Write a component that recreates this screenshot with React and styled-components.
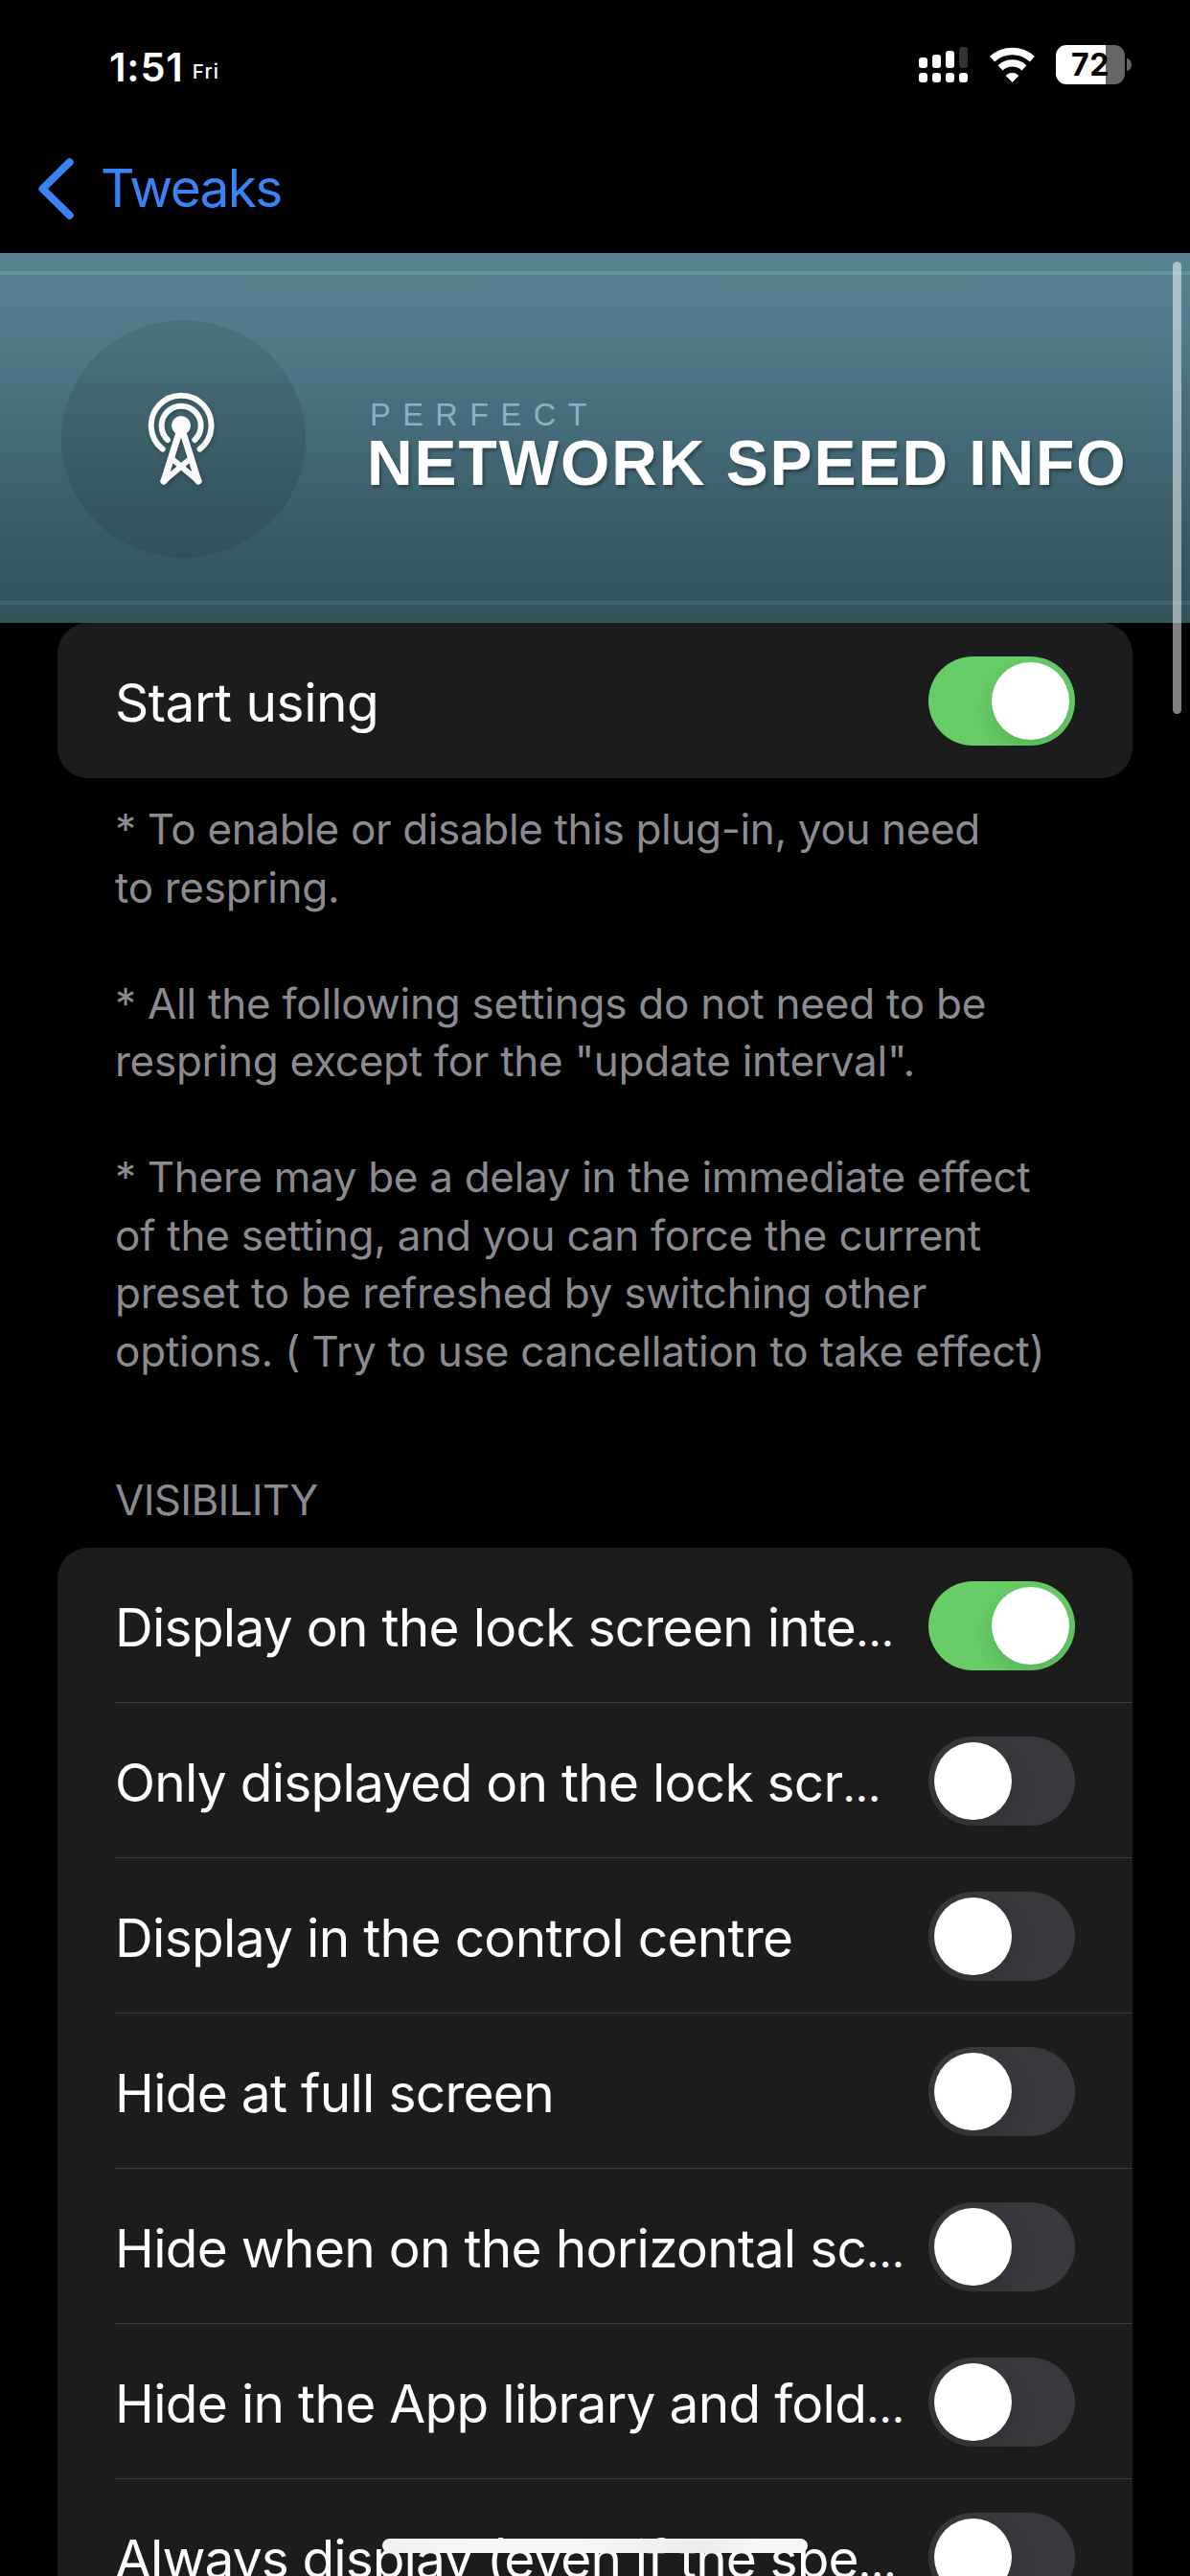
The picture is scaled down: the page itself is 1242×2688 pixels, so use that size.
import React from "react";
import styled, { createGlobalStyle } from "styled-components";

const GlobalStyle = createGlobalStyle`
  html, body {
    margin: 0;
    padding: 0;
    background: #000;
  }
  *, *::before, *::after {
    box-sizing: border-box;
  }
`;

const Screen = styled.main`
  position: relative;
  display: flex;
  flex-direction: column;
  width: 1242px;
  height: 2688px;
  overflow: hidden;
  background: #000;
  color: #fff;
  font-family: Inter, "Liberation Sans", sans-serif;
`;

/* ---------- Status bar ---------- */

const StatusBar = styled.header`
  display: flex;
  flex: none;
  align-items: center;
  justify-content: space-between;
  height: 135px;
  padding: 0 61px 0 114px;
`;

const Clock = styled.div`
  display: flex;
  align-items: center;
`;

const Time = styled.span`
  margin-top: 5px;
  font-size: 41.5px;
  font-weight: 600;
  line-height: 50px;
  letter-spacing: 0.8px;
`;

const Weekday = styled.span`
  margin: 14px 0 0 9px;
  font-size: 20.6px;
  font-weight: 500;
  line-height: 26px;
  letter-spacing: 1.2px;
`;

const Indicators = styled.div`
  display: flex;
  align-items: center;
`;

const SignalIcon = styled.svg`
  display: block;
  width: 51px;
  height: 37px;
  margin-right: 22px;
`;

const WifiIcon = styled.svg`
  display: block;
  width: 50px;
  height: 38px;
  margin-right: 20px;
`;

const Battery = styled.div`
  display: flex;
  align-items: center;
`;

const BatteryBody = styled.div`
  display: flex;
  align-items: center;
  justify-content: center;
  width: 72px;
  height: 41px;
  border-radius: 11px;
  background: linear-gradient(to right, #fff 52px, #666 52px);
  color: #000;
  font-size: 32px;
  font-weight: 700;
  line-height: 40px;
  letter-spacing: 0.6px;
`;

const BatteryCap = styled.div`
  width: 5px;
  height: 13px;
  margin-left: 2px;
  border-radius: 0 5px 5px 0 / 0 6.5px 6.5px 0;
  background: #666;
`;

/* ---------- Navigation ---------- */

const NavBar = styled.nav`
  display: flex;
  flex: none;
  align-items: center;
  height: 129px;
  padding: 0 0 6px 38px;
`;

const BackButton = styled.button`
  display: flex;
  align-items: center;
  gap: 27px;
  padding: 0;
  border: 0;
  background: none;
  color: #3a82f7;
  font: 400 55px/66px Inter, "Liberation Sans", sans-serif;
  letter-spacing: -1.7px;
`;

const BackLabel = styled.span`
  padding-bottom: 2px;
`;

const Chevron = styled.svg`
  display: block;
  width: 40px;
  height: 66px;
`;

/* ---------- Banner ---------- */

const Banner = styled.section`
  flex: none;
  height: 386px;
  padding: 19px 0;
  background: linear-gradient(
    to bottom,
    #57818f 0%,
    #527c8b 20%,
    #4a7080 38%,
    #436876 52%,
    #3b5e69 70%,
    #34565f 88%,
    #32525c 100%
  );
`;

const BannerFrame = styled.div`
  display: flex;
  align-items: flex-start;
  height: 348px;
  padding-left: 64px;
  border-top: 4px solid #6293a0;
  border-bottom: 4px solid #3d6472;
`;

const Emblem = styled.div`
  display: flex;
  align-items: center;
  justify-content: center;
  width: 255px;
  height: 248px;
  margin-top: 47px;
  border-radius: 50%;
  background: linear-gradient(
    to bottom,
    #4b717d 0%,
    #456a78 22%,
    #426670 32%,
    #385a64 65%,
    #30505b 100%
  );
`;

const TowerIcon = styled.svg`
  display: block;
  width: 80px;
  height: 108px;
  margin-right: 5px;
  filter: drop-shadow(1px 2px 2px rgba(0, 0, 0, 0.25));
`;

const BannerText = styled.div`
  margin: 130px 0 0 64px;
  font-family: "Liberation Sans", Arial, sans-serif;
  white-space: nowrap;
`;

const BannerEyebrow = styled.div`
  padding-left: 3px;
  color: #86b4c5;
  font-size: 32.5px;
  line-height: 33px;
  letter-spacing: 12.46px;
`;

const BannerTitle = styled.h1`
  margin: 0;
  font-size: 66px;
  font-weight: 700;
  line-height: 66px;
  letter-spacing: 1.92px;
  text-shadow: 2px 3px 3px rgba(0, 0, 0, 0.3);
`;

/* ---------- Settings groups ---------- */

const Card = styled.section`
  display: flex;
  flex: none;
  flex-direction: column;
  margin: 0 60px;
  border-radius: 32px;
  background: #1c1c1c;
`;

const Row = styled.div`
  display: flex;
  align-items: center;
  justify-content: space-between;
  height: 162px;
  margin-left: 60px;
  padding: 2px 60px 0 0;
  border-bottom: 1px solid ${(p) => (p.$divided ? "#3c3c3e" : "transparent")};
`;

const RowLabel = styled.span`
  padding-top: 3px;
  font-size: 55px;
  line-height: 66px;
  letter-spacing: ${(p) => p.$tracking}px;
  white-space: nowrap;
`;

const Ellipsis = styled.span`
  font-size: 46px;
  line-height: 0;
`;

const Track = styled.div`
  display: flex;
  flex: none;
  justify-content: ${(p) => (p.$on ? "flex-end" : "flex-start")};
  width: 153px;
  height: 93px;
  padding: 6px;
  overflow: hidden;
  border-radius: 47px;
  background: ${(p) => (p.$on ? "#67ce67" : "#39383d")};
`;

const Knob = styled.div`
  width: 81px;
  height: 81px;
  border-radius: 50%;
  background: #fff;
  box-shadow: 0 9px 24px rgba(0, 0, 0, 0.15);
`;

const Notes = styled.div`
  flex: none;
  padding: 23px 0 0 120px;
  color: #8c8b91;
  font-size: 44px;
`;

const Note = styled.p`
  margin: 0 0 ${(p) => (p.$last ? 0 : 60.5)}px;
`;

const NoteLine = styled.span`
  display: block;
  height: 60.5px;
  line-height: 60.5px;
  letter-spacing: ${(p) => p.$tracking}px;
  white-space: nowrap;
`;

const SectionHeading = styled.h2`
  flex: none;
  height: 175px;
  margin: 0;
  padding: 95px 0 0 120px;
  color: #8c8b91;
  font-size: 44px;
  font-weight: 400;
  line-height: 60px;
  letter-spacing: -0.7px;
`;

/* ---------- Overlays ---------- */

const ScrollThumb = styled.div`
  position: absolute;
  top: 273px;
  right: 9px;
  width: 9px;
  height: 472px;
  border-radius: 4.5px;
  background: rgba(255, 255, 255, 0.5);
`;

const HomeIndicator = styled.div`
  position: absolute;
  bottom: 24px;
  left: 399px;
  width: 444px;
  height: 15px;
  border-radius: 7.5px;
  background: linear-gradient(
    to right,
    #f0f0f0,
    #f7f7f7 22%,
    #f7f7f7 45%,
    #ececec 75%,
    #f7f7f7 88%
  );
`;

const notes = [
  [
    ["* To enable or disable this plug-in, you need", -0.35],
    ["to respring.", -0.3],
  ],
  [
    ["* All the following settings do not need to be", -0.23],
    ['respring except for the "update interval".', -0.26],
  ],
  [
    ["* There may be a delay in the immediate effect", -0.32],
    ["of the setting, and you can force the current", -0.25],
    ["preset to be refreshed by switching other", -0.28],
    ["options. ( Try to use cancellation to take effect)", -0.2],
  ],
];

const visibility = [
  { label: "Display on the lock screen inte", cut: true, on: true, tracking: -0.72 },
  { label: "Only displayed on the lock scr", cut: true, tracking: -0.76 },
  { label: "Display in the control centre", tracking: -0.68 },
  { label: "Hide at full screen", tracking: -0.72 },
  { label: "Hide when on the horizontal sc", cut: true, tracking: -0.72 },
  { label: "Hide in the App library and fold", cut: true, tracking: -0.7 },
  { label: "Always display (even if the spe", cut: true, tracking: -0.9 },
];

function Switch({ on }) {
  return (
    <Track $on={on} role="switch" aria-checked={Boolean(on)}>
      <Knob />
    </Track>
  );
}

function SettingRow({ label, cut, on, tracking, divided }) {
  return (
    <Row $divided={divided}>
      <RowLabel $tracking={tracking}>
        {label}
        {cut && <Ellipsis>…</Ellipsis>}
      </RowLabel>
      <Switch on={on} />
    </Row>
  );
}

export default function App() {
  return (
    <Screen>
      <GlobalStyle />

      <StatusBar>
        <Clock>
          <Time>1:51</Time>
          <Weekday>Fri</Weekday>
        </Clock>
        <Indicators>
          <SignalIcon viewBox="0 0 51 37" fill="#fff">
            <rect x="0" y="11" width="9" height="11" rx="3" />
            <rect x="14" y="8" width="9" height="14" rx="3" />
            <rect x="28" y="4" width="9" height="18" rx="3" />
            <rect x="42" y="0" width="9" height="22" rx="3" fill="#333" />
            <rect x="0" y="27" width="9" height="10" rx="3.2" />
            <rect x="14" y="27" width="9" height="10" rx="3.2" />
            <rect x="28" y="27" width="9" height="10" rx="3.2" />
            <rect x="42" y="27" width="9" height="10" rx="3.2" />
          </SignalIcon>
          <WifiIcon viewBox="0 0 50 38" fill="none">
            <path d="M3.6 12.6 A31 31 0 0 1 45.4 12.6" stroke="#fff" strokeWidth="7.6" />
            <path d="M12 21.8 A18.6 18.6 0 0 1 37 21.8" stroke="#fff" strokeWidth="7.2" />
            <path
              d="M24.5 36.4 L18.2 29.9 A9.2 9.2 0 0 1 30.8 29.9 Z"
              fill="#fff"
              stroke="#fff"
              strokeWidth="1"
              strokeLinejoin="round"
            />
          </WifiIcon>
          <Battery>
            <BatteryBody>72</BatteryBody>
            <BatteryCap />
          </Battery>
        </Indicators>
      </StatusBar>

      <NavBar>
        <BackButton>
          <Chevron viewBox="0 0 40 66" fill="none">
            <path
              d="M34.7 5.2 L6.4 33 L34.7 60.8"
              stroke="#3a82f7"
              strokeWidth="8"
              strokeLinecap="round"
              strokeLinejoin="round"
            />
          </Chevron>
          <BackLabel>Tweaks</BackLabel>
        </BackButton>
      </NavBar>

      <Banner>
        <BannerFrame>
          <Emblem>
            <TowerIcon viewBox="-40 -40 80 108" fill="none" stroke="#fafafa" strokeLinecap="round" strokeLinejoin="round">
              <path d="M-19.3 24.7 A31.4 31.4 0 1 1 19.6 24.7" strokeWidth="6" />
              <path d="M-14 15 A20.5 20.5 0 1 1 14.3 15" strokeWidth="6" />
              <circle cx="0" cy="0" r="10" fill="#fafafa" stroke="none" />
              <path d="M-1.6 6 L-18 58 M1.6 6 L18 58" strokeWidth="7" />
              <path d="M-18 58 L8 36 M18 58 L-8 36" strokeWidth="6" />
              <path d="M-18 58 L-12 51 M18 58 L12 51" strokeWidth="7" />
            </TowerIcon>
          </Emblem>
          <BannerText>
            <BannerEyebrow>PERFECT</BannerEyebrow>
            <BannerTitle>NETWORK SPEED INFO</BannerTitle>
          </BannerText>
        </BannerFrame>
      </Banner>

      <Card>
        <SettingRow label="Start using" on tracking={-0.48} />
      </Card>

      <Notes>
        {notes.map((lines, i) => (
          <Note key={i} $last={i === notes.length - 1}>
            {lines.map(([text, tracking]) => (
              <NoteLine key={text} $tracking={tracking}>
                {text}
              </NoteLine>
            ))}
          </Note>
        ))}
      </Notes>

      <SectionHeading>VISIBILITY</SectionHeading>

      <Card>
        {visibility.map((item) => (
          <SettingRow key={item.label} {...item} divided />
        ))}
      </Card>

      <ScrollThumb />
      <HomeIndicator />
    </Screen>
  );
}
